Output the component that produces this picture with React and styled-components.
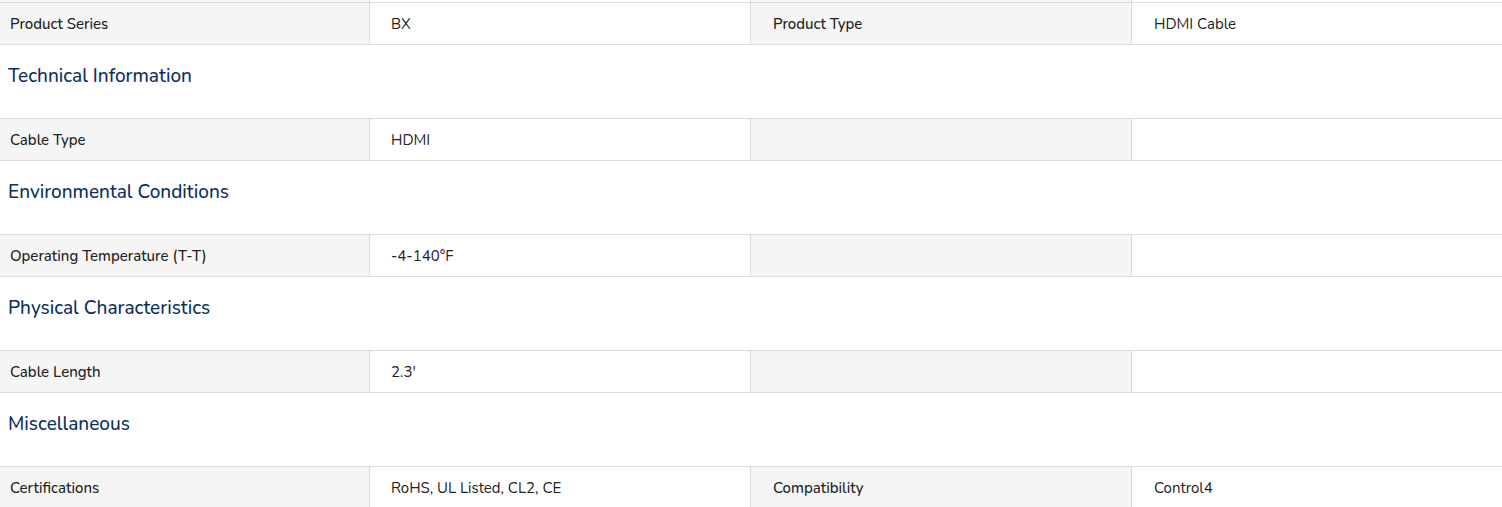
import React from "react";
import styled, { createGlobalStyle } from "styled-components";

const GlobalStyle = createGlobalStyle`
  body {
    margin: 0;
    background: #fff;
    font-family: "Nunito", "Lato", "Open Sans", sans-serif;
    color: #222;
  }
`;

const SpecTable = styled.div`
  display: flex;
  flex-direction: column;
  width: 1502px;
`;

const Row = styled.div`
  display: grid;
  grid-template-columns: 370px 381px 381px 370px;
  height: ${(p) => (p.$stub ? "3px" : "42px")};
  border-bottom: 1px solid #dcdcdc;
  box-sizing: border-box;
  overflow: hidden;
`;

const Cell = styled.div`
  display: flex;
  align-items: center;
  padding-left: ${(p) => p.$pad || 21}px;
  background: ${(p) => (p.$label ? "#f5f5f5" : "#fff")};
  border-right: ${(p) => (p.$last ? "none" : "1px solid #dcdcdc")};
  font-size: 15px;
  font-weight: ${(p) => (p.$label ? 500 : 400)};
  color: #222;
  white-space: nowrap;
`;

const SectionHeading = styled.h3`
  margin: 0;
  height: 74px;
  box-sizing: border-box;
  padding: 19px 0 0 8px;
  border-bottom: 1px solid #dcdcdc;
  font-size: 19px;
  font-weight: 500;
  line-height: 24px;
  color: #0b2f5e;
`;

const sections = [
  {
    title: "Technical Information",
    rows: [["Cable Type", "HDMI", "", ""]],
  },
  {
    title: "Environmental Conditions",
    rows: [["Operating Temperature (T-T)", "-4-140°F", "", ""]],
  },
  {
    title: "Physical Characteristics",
    rows: [["Cable Length", "2.3'", "", ""]],
  },
  {
    title: "Miscellaneous",
    rows: [["Certifications", "RoHS, UL Listed, CL2, CE", "Compatibility", "Control4"]],
  },
];

const SpecRow = ({ cells, stub }) => (
  <Row $stub={stub}>
    <Cell $label $pad={10}>{cells[0]}</Cell>
    <Cell>{cells[1]}</Cell>
    <Cell $label $pad={22}>{cells[2]}</Cell>
    <Cell $last $pad={22}>{cells[3]}</Cell>
  </Row>
);

export default function App() {
  return (
    <>
      <GlobalStyle />
      <SpecTable>
        <SpecRow stub cells={["", "", "", ""]} />
        <SpecRow cells={["Product Series", "BX", "Product Type", "HDMI Cable"]} />
        {sections.map((s) => (
          <React.Fragment key={s.title}>
            <SectionHeading>{s.title}</SectionHeading>
            {s.rows.map((r) => (
              <SpecRow key={r[0]} cells={r} />
            ))}
          </React.Fragment>
        ))}
      </SpecTable>
    </>
  );
}
